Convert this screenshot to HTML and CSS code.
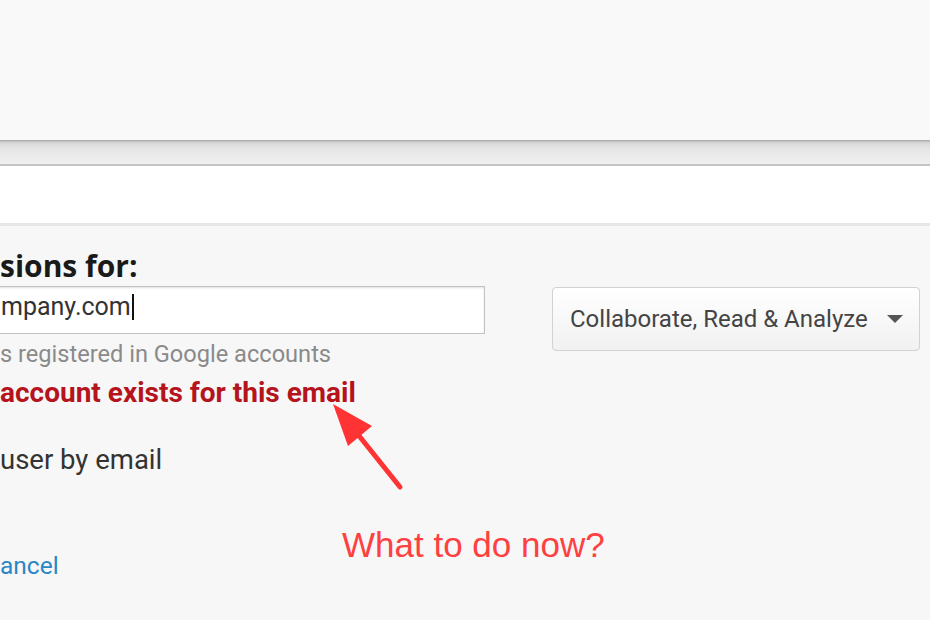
FILE: index.html
```html
<!DOCTYPE html>
<html lang="en">
<head>
<meta charset="utf-8">
<title>Permissions</title>
<link rel="stylesheet" href="styles.css">
</head>
<body>
<div class="top"></div>
<div class="shelf"></div>
<div class="bar"></div>
<main class="main">
  <section class="form">
    <h2 class="title">sions for:</h2>
    <div class="field"><span class="value">mpany.com</span><span class="caret"></span></div>
    <p class="hint">s registered in Google accounts</p>
    <p class="error">account exists for this email</p>
    <p class="option">user by email</p>
    <a class="cancel" href="#">ancel</a>
  </section>
  <div class="select">
    <span class="select-label">Collaborate, Read &amp; Analyze</span>
    <span class="select-arrow"></span>
  </div>
  <div class="note">What to do now?</div>
  <svg class="pointer" width="90" height="100" viewBox="0 0 90 100">
    <line x1="78" y1="87" x2="22" y2="17" stroke="#ff3333" stroke-width="5" stroke-linecap="round"/>
    <polygon points="11,4 50,26 26,46" fill="#ff3333"/>
  </svg>
</main>
</body>
</html>
```
FILE: styles.css
```css
html, body {
  margin: 0;
  padding: 0;
}
body {
  width: 930px;
  height: 620px;
  overflow: hidden;
  background: #f7f7f7;
  font-family: Roboto, "Liberation Sans", Arial, sans-serif;
}
.top {
  height: 140px;
  background: #f9f9f9;
}
.shelf {
  height: 24px;
  background: linear-gradient(#a0a0a0 0, #bdbdbd 1px, #d8d8d8 3px, #e4e4e4 8px, #ebebeb 16px, #efefef 100%);
  border-bottom: 2px solid #c4c4c4;
}
.bar {
  height: 57px;
  background: #ffffff;
  border-bottom: 3px solid #e6e6e6;
}
.main {
  position: relative;
  display: flex;
  gap: 67px;
  padding-top: 22px;
  height: 372px;
  box-sizing: border-box;
}
.form {
  width: 485px;
  display: flex;
  flex-direction: column;
  align-items: flex-start;
}
.title {
  margin: 0;
  font-family: "Open Sans", sans-serif;
  font-weight: 700;
  font-size: 30px;
  line-height: 36px;
  color: #1a1a1a;
}
.field {
  margin: 2px 0 0 -12px;
  width: 497px;
  height: 48px;
  box-sizing: border-box;
  padding: 0 0 6px 12px;
  background: #fff;
  border: 1px solid #c2c2c2;
  box-shadow: inset 0 1px 2px rgba(0, 0, 0, 0.12);
  display: flex;
  align-items: center;
  font-size: 25px;
  line-height: 40px;
  color: #333;
}
.caret {
  display: inline-block;
  width: 2px;
  height: 26px;
  margin-left: 1px;
  background: #111;
}
.hint {
  margin: 5px 0 0;
  font-size: 23.6px;
  line-height: 30px;
  color: #8a8a8a;
}
.error {
  margin: 9px 0 0;
  font-size: 28px;
  font-weight: 700;
  line-height: 30px;
  color: #b5141d;
}
.option {
  margin: 36px 0 0;
  font-size: 27.5px;
  line-height: 32px;
  color: #333;
}
.cancel {
  margin-top: 75px;
  font-size: 24.5px;
  line-height: 30px;
  color: #2a86c6;
  text-decoration: none;
}
.select {
  margin-top: 39px;
  width: 368px;
  height: 64px;
  box-sizing: border-box;
  border: 1px solid #d2d2d2;
  border-radius: 4px;
  background: linear-gradient(#ffffff, #f1f1f1);
  display: flex;
  align-items: center;
  justify-content: space-between;
  padding: 0 16px 0 17px;
  font-size: 24px;
  line-height: 62px;
  color: #444;
}
.select-arrow {
  width: 0;
  height: 0;
  border-left: 8px solid transparent;
  border-right: 8px solid transparent;
  border-top: 8px solid #555;
}
.note {
  position: absolute;
  left: 342px;
  top: 300px;
  font-family: "Liberation Sans", Arial, sans-serif;
  font-size: 35px;
  line-height: 38px;
  color: #ff4040;
}
.pointer {
  position: absolute;
  left: 322px;
  top: 174px;
}
```
